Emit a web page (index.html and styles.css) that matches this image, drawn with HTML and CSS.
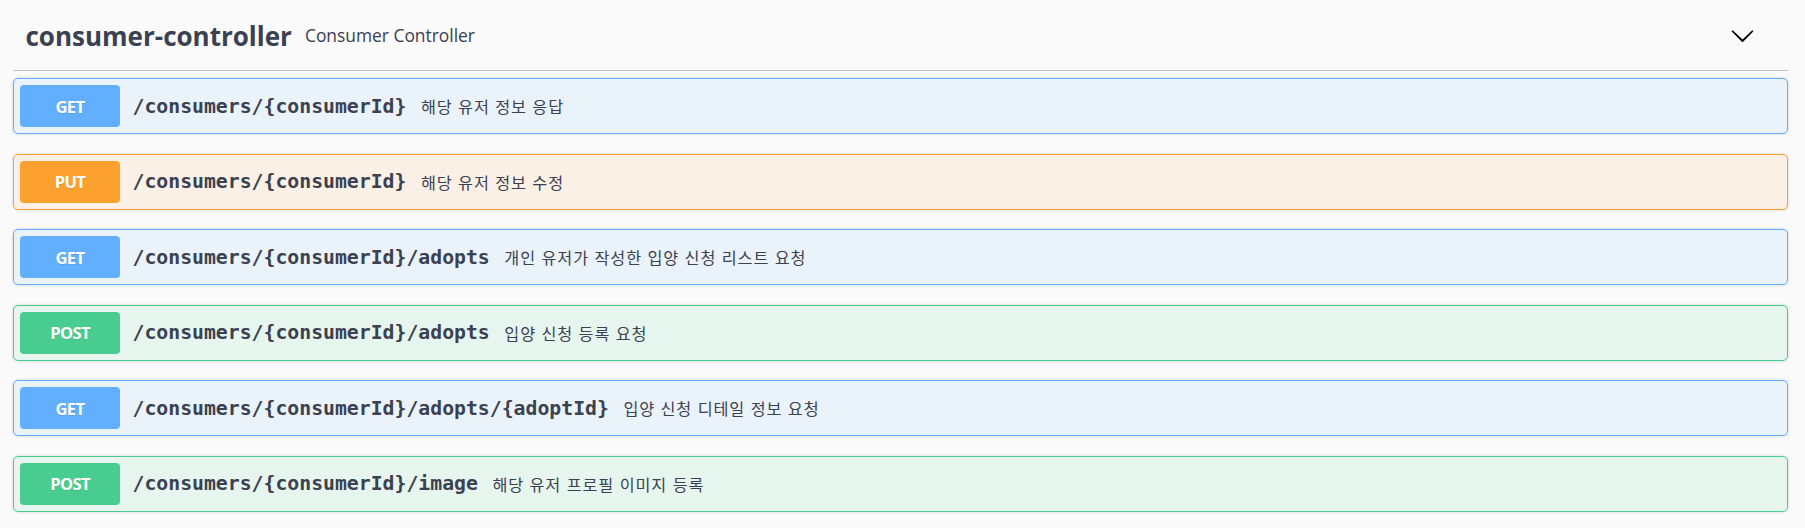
FILE: index.html
```html
<!DOCTYPE html>
<html lang="ko">
<head>
<meta charset="utf-8">
<title>consumer-controller</title>
<link rel="stylesheet" href="styles.css">
</head>
<body>
<div class="tag-section">
  <div class="tag-header">
    <h3 class="tag-title">consumer-controller</h3>
    <small class="tag-desc">Consumer Controller</small>
    <span class="spacer"></span>
    <svg class="arrow" width="25" height="25" viewBox="0 0 20 20" aria-hidden="true">
      <path d="M17.418 6.109c.272-.268.709-.268.979 0s.271.701 0 .969l-7.908 7.83c-.27.268-.707.268-.979 0l-7.908-7.830c-.27-.268-.27-.701 0-.969.271-.268.709-.268.979 0L10 13.25l7.418-7.141z"/>
    </svg>
  </div>
  <div class="ops">
    <div class="opblock get">
      <span class="method">GET</span>
      <span class="path">/consumers/{consumerId}</span>
      <span class="desc">해당 유저 정보 응답</span>
    </div>
    <div class="opblock put">
      <span class="method">PUT</span>
      <span class="path">/consumers/{consumerId}</span>
      <span class="desc">해당 유저 정보 수정</span>
    </div>
    <div class="opblock get">
      <span class="method">GET</span>
      <span class="path">/consumers/{consumerId}/adopts</span>
      <span class="desc">개인 유저가 작성한 입양 신청 리스트 요청</span>
    </div>
    <div class="opblock post">
      <span class="method">POST</span>
      <span class="path">/consumers/{consumerId}/adopts</span>
      <span class="desc">입양 신청 등록 요청</span>
    </div>
    <div class="opblock get">
      <span class="method">GET</span>
      <span class="path">/consumers/{consumerId}/adopts/{adoptId}</span>
      <span class="desc">입양 신청 디테일 정보 요청</span>
    </div>
    <div class="opblock post">
      <span class="method">POST</span>
      <span class="path">/consumers/{consumerId}/image</span>
      <span class="desc">해당 유저 프로필 이미지 등록</span>
    </div>
  </div>
</div>
</body>
</html>
```
FILE: styles.css
```css
html, body {
  margin: 0;
  padding: 0;
  background: #fafafa;
}
body {
  font-family: "Open Sans", "Noto Sans CJK KR", sans-serif;
  color: #3b4151;
}
.tag-section {
  margin-left: 13px;
  width: 1775px;
}
.tag-header {
  display: flex;
  align-items: center;
  height: 70px;
  padding: 0 33px 0 12.5px;
  border-bottom: 1px solid rgba(59, 65, 81, 0.3);
  margin-bottom: 7px;
  box-sizing: content-box;
}
.tag-title {
  margin: 0;
  font-family: "Open Sans", sans-serif;
  font-weight: 700;
  font-size: 26px;
  color: #3b4151;
  position: relative;
  top: 1px;
}
.tag-desc {
  margin-left: 13px;
  font-family: "Open Sans", sans-serif;
  font-size: 17.4px;
  color: #3b4151;
}
.spacer {
  flex: 1;
}
.arrow {
  display: block;
  fill: #000;
}
.ops {
  display: flex;
  flex-direction: column;
}
.opblock {
  display: flex;
  align-items: center;
  border: 1px solid;
  border-radius: 5px;
  padding: 6px;
  margin-bottom: 19.6px;
  box-shadow: 0 0 3px rgba(0, 0, 0, 0.19);
}
.opblock.get {
  background: rgba(97, 175, 254, 0.1);
  border-color: #61affe;
}
.opblock.put {
  background: rgba(252, 161, 48, 0.1);
  border-color: #fca130;
}
.opblock.post {
  background: rgba(73, 204, 144, 0.1);
  border-color: #49cc90;
}
.method {
  display: flex;
  align-items: center;
  justify-content: center;
  width: 100px;
  height: 42px;
  border-radius: 4px;
  color: #fff;
  font-family: "Open Sans", sans-serif;
  font-weight: 700;
  font-size: 16.5px;
  letter-spacing: -0.6px;
  text-shadow: 0 1px 0 rgba(0, 0, 0, 0.1);
}
.get .method { background: #61affe; }
.put .method { background: #fca130; }
.post .method { background: #49cc90; }
.path {
  padding: 0 12.5px;
  font-family: "DejaVu Sans Mono", monospace;
  font-weight: 700;
  font-size: 19.8px;
  color: #3b4151;
}
.desc {
  margin-left: 2px;
  font-family: "Noto Sans CJK KR", "Open Sans", sans-serif;
  font-size: 16.25px;
  letter-spacing: 0.9px;
  color: #3b4151;
}
```
